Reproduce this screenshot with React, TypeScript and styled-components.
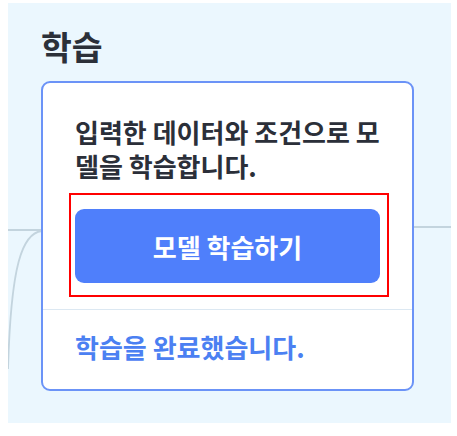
import React from "react";
import styled, { createGlobalStyle } from "styled-components";

const GlobalStyle = createGlobalStyle`
  html, body {
    margin: 0;
    padding: 0;
    background: #ffffff;
  }
  body {
    font-family: "Noto Sans CJK KR", "Noto Sans", sans-serif;
  }
`;

const Page = styled.div`
  padding: 3px 0 0 8px;
`;

const Panel = styled.section`
  position: relative;
  width: 443px;
  height: 420px;
  box-sizing: border-box;
  padding: 24px 0 0 33px;
  background: #ebf7fe;
`;

const Edges = styled.svg`
  position: absolute;
  left: 0;
  top: 0;
  width: 443px;
  height: 420px;
  pointer-events: none;
`;

const Title = styled.h2`
  position: relative;
  margin: 0 0 16px;
  font-size: 33.5px;
  line-height: 38px;
  font-weight: 700;
  color: #2b3039;
`;

const Card = styled.div`
  position: relative;
  width: 373px;
  height: 310px;
  box-sizing: border-box;
  border: 2px solid #6b93f7;
  border-radius: 9px;
  background: #ffffff;
  display: flex;
  flex-direction: column;
`;

const Top = styled.div`
  display: flex;
  flex-direction: column;
  gap: 26px;
  padding: 32px 32px 26px;
  border-bottom: 1.5px solid #dce8f2;
`;

const Text = styled.p<{ $tone?: "dark" | "blue" }>`
  margin: 0;
  font-size: 26px;
  line-height: 34px;
  font-weight: 700;
  color: ${p => (p.$tone === "blue" ? "#4b80f2" : "#2b2f39")};
`;

const Highlight = styled.div`
  position: relative;
`;

const Frame = styled.div`
  position: absolute;
  top: -16px;
  left: -6px;
  right: -9px;
  bottom: -14px;
  border: 2px solid #ff0000;
  pointer-events: none;
`;

const Button = styled.button`
  display: flex;
  align-items: center;
  justify-content: center;
  width: 100%;
  height: 74px;
  border: 0;
  border-radius: 9px;
  background: #4f7ffb;
  color: #ffffff;
  font-family: inherit;
  font-size: 26px;
  font-weight: 700;
  cursor: pointer;
`;

const Bottom = styled.div`
  padding: 20px 32px 24px;
`;

const App = () => {
  const [done, setDone] = React.useState(true);
  return (
    <Page>
      <GlobalStyle />
      <Panel>
        <Edges viewBox="0 0 443 420">
          <g fill="none" stroke="#c3d4de" strokeWidth="1.8">
            <path d="M0 227 H34" />
            <path d="M34 228 C14 230 3 262 0 366" />
            <path d="M406 224 H443" />
          </g>
        </Edges>
        <Title>학습</Title>
        <Card>
          <Top>
            <Text>입력한 데이터와 조건으로 모델을 학습합니다.</Text>
            <Highlight>
              <Button onClick={() => setDone(true)}>모델 학습하기</Button>
              <Frame />
            </Highlight>
          </Top>
          <Bottom>
            {done && <Text $tone="blue">학습을 완료했습니다.</Text>}
          </Bottom>
        </Card>
      </Panel>
    </Page>
  );
};

export default App;
